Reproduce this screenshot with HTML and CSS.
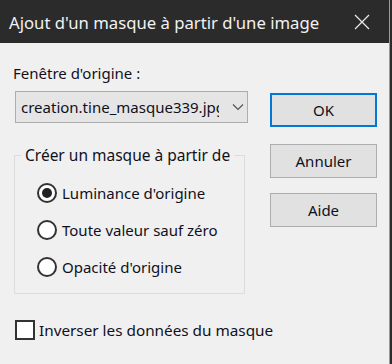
FILE: index.html
```html
<!DOCTYPE html>
<html lang="fr">
<head>
    <meta charset="UTF-8">
    <title>Ajout d'un masque à partir d'une image</title>
    <link rel="stylesheet" href="styles.css">
</head>
<body>
    <div class="window">
        <div class="titlebar">
            <span class="title">Ajout d'un masque à partir d'une image</span>
            <svg class="close" width="16" height="16" viewBox="0 0 16 16">
                <path d="M1 1 L15 15 M15 1 L1 15" stroke="#e8e8e8" stroke-width="1.3" fill="none"/>
            </svg>
        </div>

        <div class="content">
            <div class="left">
                <div class="label">Fenêtre d'origine :</div>
                <div class="select">
                    <span class="select-text">creation.tine_masque339.jpg</span>
                    <svg class="chevron" width="12" height="8" viewBox="0 0 12 8">
                        <path d="M1 1.5 L6 6.5 L11 1.5" stroke="#555" stroke-width="1.2" fill="none"/>
                    </svg>
                </div>

                <fieldset class="group">
                    <legend class="legend">Créer un masque à partir de</legend>
                    <div class="radios">
                        <div class="radio-row">
                            <span class="radio checked"></span>
                            <span class="radio-label">Luminance d'origine</span>
                        </div>
                        <div class="radio-row">
                            <span class="radio"></span>
                            <span class="radio-label">Toute valeur sauf zéro</span>
                        </div>
                        <div class="radio-row">
                            <span class="radio"></span>
                            <span class="radio-label">Opacité d'origine</span>
                        </div>
                    </div>
                </fieldset>

                <div class="check-row">
                    <span class="checkbox"></span>
                    <span class="check-label">Inverser les données du masque</span>
                </div>
            </div>

            <div class="right">
                <button class="btn btn-default">OK</button>
                <button class="btn">Annuler</button>
                <button class="btn">Aide</button>
            </div>
        </div>
    </div>
</body>
</html>
```

FILE: styles.css
```css
body {
    margin: 0;
    background-color: #2b2b2b;
    font-family: "Noto Sans", "Open Sans", sans-serif;
    color: #10101c;
    overflow: hidden;
}

.window {
    width: 389px;
    height: 364px;
    background-color: #f0f0f0;
    border-right: 1px solid #9a9a9a;
}

.titlebar {
    height: 43px;
    background-color: #2b2b2b;
    display: flex;
    align-items: center;
    justify-content: space-between;
    padding-left: 9px;
    padding-right: 18px;
    box-sizing: border-box;
}

.title {
    color: #f2f2f2;
    font-size: 16.7px;
    white-space: nowrap;
    margin-top: 1px;
}

.close {
    margin-right: 1px;
}

.content {
    display: flex;
    padding-left: 13px;
}

.left {
    width: 232px;
}

.label {
    font-size: 15px;
    line-height: 20px;
    margin-top: 20px;
    white-space: nowrap;
}

.select {
    margin-top: 8px;
    margin-left: 2px;
    height: 32px;
    width: 233px;
    box-sizing: border-box;
    border: 1px solid #adadad;
    background-color: #e5e5e5;
    display: flex;
    align-items: center;
    padding-left: 5px;
}

.select-text {
    font-size: 15px;
    width: 198px;
    overflow: hidden;
    white-space: nowrap;
}

.chevron {
    margin-left: 13px;
}

.group {
    margin: 22px 0 0 1px;
    width: 231px;
    box-sizing: border-box;
    border: 1px solid #dcdcdc;
    padding: 0;
}

.legend {
    font-size: 15.5px;
    line-height: 20px;
    margin-left: 6px;
    padding: 0 4px;
    white-space: nowrap;
}

.radios {
    display: flex;
    flex-direction: column;
    gap: 17px;
    padding: 18px 0 16px 22px;
}

.radio-row {
    display: flex;
    align-items: center;
    height: 20px;
}

.radio {
    width: 20px;
    height: 20px;
    box-sizing: border-box;
    border: 2px solid #333333;
    border-radius: 50%;
    background-color: #ffffff;
    display: flex;
    align-items: center;
    justify-content: center;
}

.radio.checked::after {
    content: "";
    width: 10px;
    height: 10px;
    border-radius: 50%;
    background-color: #222222;
}

.radio-label {
    font-size: 15px;
    margin-left: 5px;
    white-space: nowrap;
}

.check-row {
    display: flex;
    align-items: center;
    margin-top: 26px;
    margin-left: 2px;
}

.checkbox {
    width: 20px;
    height: 20px;
    box-sizing: border-box;
    border: 2px solid #333333;
    background-color: #ffffff;
    flex-shrink: 0;
}

.check-label {
    font-size: 15.3px;
    margin-left: 4px;
    white-space: nowrap;
}

.right {
    display: flex;
    flex-direction: column;
    margin-left: 25px;
    margin-top: 50px;
}

.btn {
    width: 107px;
    height: 34px;
    box-sizing: border-box;
    border: 1px solid #adadad;
    background-color: #e1e1e1;
    font-family: "Noto Sans", "Open Sans", sans-serif;
    font-size: 15px;
    color: #10101c;
    padding: 0;
    margin-bottom: 15px;
}

.btn-default {
    border: 2px solid #0078d7;
    margin-bottom: 17px;
}
```
